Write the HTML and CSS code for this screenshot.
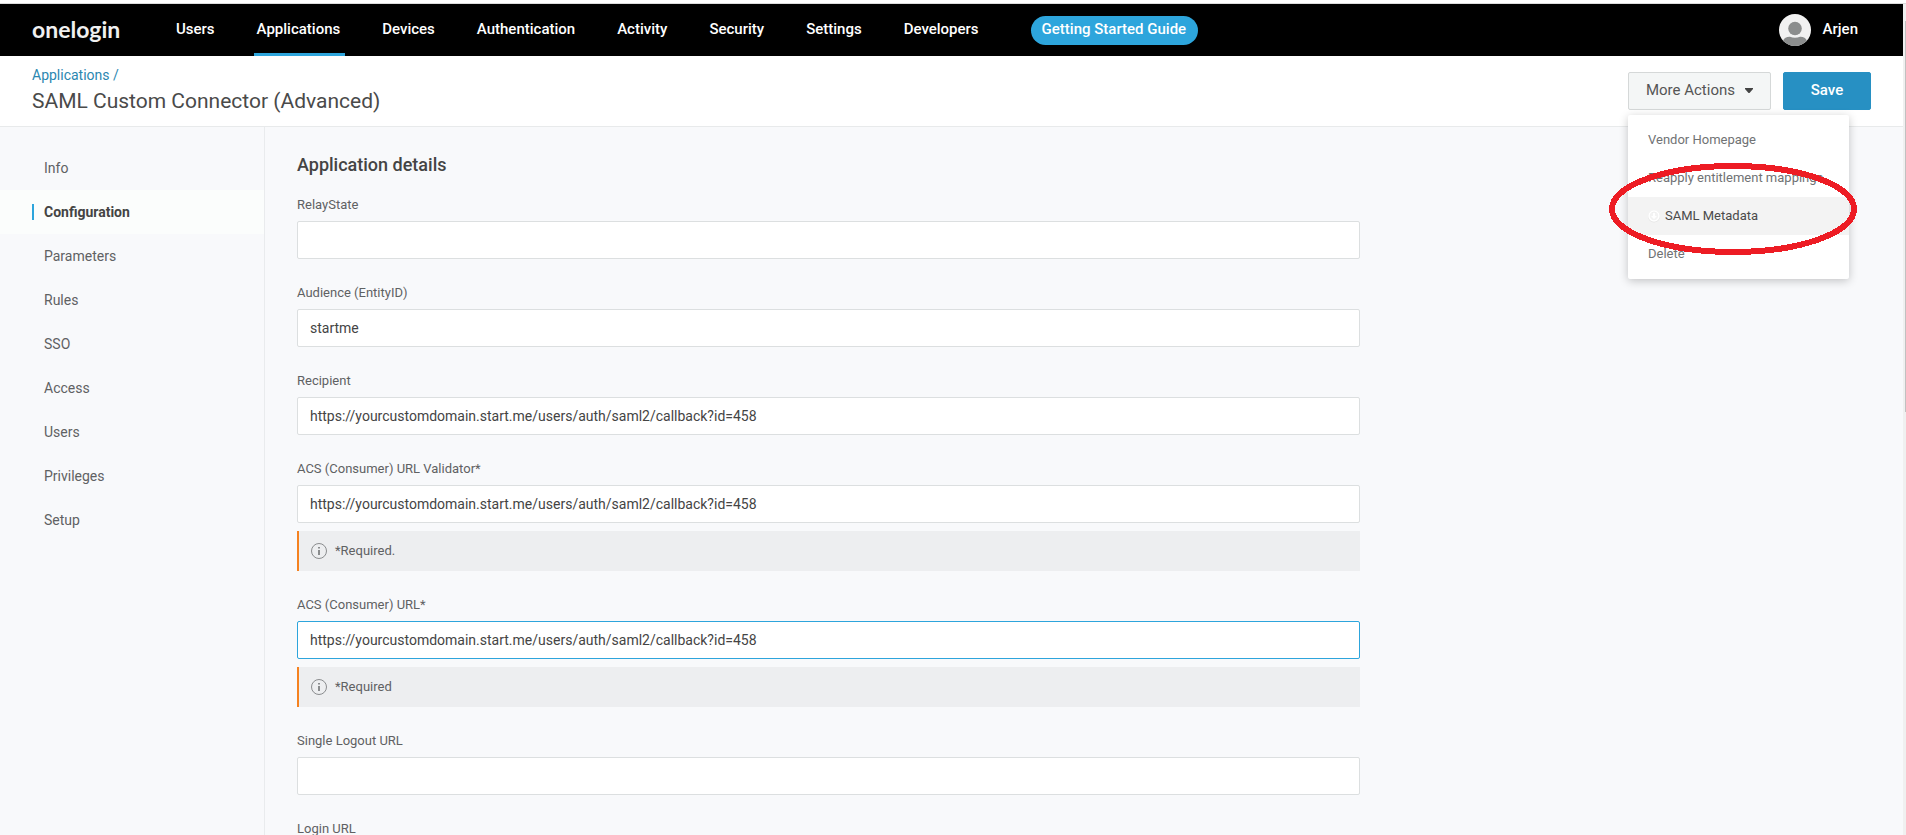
FILE: index.html
```html
<!DOCTYPE html>
<html lang="en">
<head>
<meta charset="utf-8">
<title>SAML Custom Connector (Advanced)</title>
<link rel="stylesheet" href="styles.css">
</head>
<body>
<div class="window">
  <div class="app">
    <header class="topbar">
      <a class="logo" href="#">onelogin</a>
      <nav class="nav">
        <a class="nav-link" href="#">Users</a>
        <a class="nav-link nav-link-active" href="#">Applications</a>
        <a class="nav-link" href="#">Devices</a>
        <a class="nav-link" href="#">Authentication</a>
        <a class="nav-link" href="#">Activity</a>
        <a class="nav-link" href="#">Security</a>
        <a class="nav-link" href="#">Settings</a>
        <a class="nav-link" href="#">Developers</a>
      </nav>
      <a class="guide" href="#">Getting Started Guide</a>
      <a class="account" href="#">
        <svg class="avatar" viewBox="0 0 32 32" aria-hidden="true">
          <defs><clipPath id="avatar-clip"><circle cx="16" cy="16" r="16"/></clipPath></defs>
          <circle cx="16" cy="16" r="16" fill="#f1f1f1"/>
          <g clip-path="url(#avatar-clip)" fill="#8b8d8d">
            <circle cx="16" cy="14.500" r="6.800"/>
            <path d="M4 27C5 24 8 22.600 11 22.800C14 24.200 18 24.200 21 22.800C24 22.600 27 24 28 27V32H4Z"/>
          </g>
        </svg>
        <span class="account-name">Arjen</span>
      </a>
    </header>

    <div class="page-head">
      <div class="titles">
        <a class="crumb" href="#">Applications /</a>
        <h1 class="title">SAML Custom Connector (Advanced)</h1>
      </div>
      <div class="actions">
        <div class="more">
          <button class="button button-more" type="button" aria-expanded="true">More Actions
            <svg class="caret" viewBox="0 0 8 5" aria-hidden="true"><path d="M0 0H8V1L4.500 5H3.500L0 1Z" fill="#444"/></svg>
          </button>
          <div class="menu">
            <a class="menu-item" href="#">Vendor Homepage</a>
            <a class="menu-item" href="#">Reapply entitlement mappings</a>
            <a class="menu-item menu-item-hover" href="#">
              <svg class="download" viewBox="0 0 12 12" aria-hidden="true"><circle cx="6" cy="6.500" r="5.300" fill="none" stroke="#e4e4e4" stroke-width="1.400"/><circle cx="6" cy="6" r="5" fill="none" stroke="#fff" stroke-width="1.600"/><path d="M5 3H7V6H9L6 9L3 6H5Z" fill="#fff"/></svg>SAML Metadata</a>
            <a class="menu-item" href="#">Delete</a>
            <svg class="marker" viewBox="0 0 248 92" aria-hidden="true"><ellipse cx="124" cy="46" rx="121" ry="43" fill="none" stroke="#ed1c24" stroke-width="6" shape-rendering="crispEdges"/></svg>
          </div>
        </div>
        <button class="button button-save" type="submit" form="details">Save</button>
      </div>
    </div>

    <div class="body">
      <nav class="side">
        <a class="side-link" href="#">Info</a>
        <a class="side-link side-link-active" href="#">Configuration</a>
        <a class="side-link" href="#">Parameters</a>
        <a class="side-link" href="#">Rules</a>
        <a class="side-link" href="#">SSO</a>
        <a class="side-link" href="#">Access</a>
        <a class="side-link" href="#">Users</a>
        <a class="side-link" href="#">Privileges</a>
        <a class="side-link" href="#">Setup</a>
      </nav>
      <main class="main">
        <form class="form" id="details">
          <h2 class="section-title">Application details</h2>
          <div class="field">
            <label class="label" for="relay">RelayState</label>
            <input class="input" id="relay" type="text">
          </div>
          <div class="field">
            <label class="label" for="audience">Audience (EntityID)</label>
            <input class="input" id="audience" type="text" value="startme">
          </div>
          <div class="field">
            <label class="label" for="recipient">Recipient</label>
            <input class="input" id="recipient" type="text" value="https://yourcustomdomain.start.me/users/auth/saml2/callback?id=458">
          </div>
          <div class="field">
            <label class="label" for="validator">ACS (Consumer) URL Validator*</label>
            <input class="input" id="validator" type="text" value="https://yourcustomdomain.start.me/users/auth/saml2/callback?id=458">
            <div class="note">
              <svg class="info" viewBox="0 0 16 16" aria-hidden="true"><circle cx="8" cy="8" r="7.500" fill="none" stroke="#8a8c8e"/><path d="M7 4H9V5.500H7ZM7 7H9V12H7Z" fill="#8a8c8e"/></svg>
              <span>*Required.</span>
            </div>
          </div>
          <div class="field">
            <label class="label" for="acs">ACS (Consumer) URL*</label>
            <input class="input input-current" id="acs" type="text" value="https://yourcustomdomain.start.me/users/auth/saml2/callback?id=458">
            <div class="note">
              <svg class="info" viewBox="0 0 16 16" aria-hidden="true"><circle cx="8" cy="8" r="7.500" fill="none" stroke="#8a8c8e"/><path d="M7 4H9V5.500H7ZM7 7H9V12H7Z" fill="#8a8c8e"/></svg>
              <span>*Required</span>
            </div>
          </div>
          <div class="field">
            <label class="label" for="logout">Single Logout URL</label>
            <input class="input" id="logout" type="text">
          </div>
          <div class="field">
            <label class="label" for="login">Login URL</label>
            <input class="input" id="login" type="text">
          </div>
        </form>
      </main>
    </div>
  </div>
  <div class="track"><div class="thumb"></div></div>
</div>
</body>
</html>
```
FILE: styles.css
```css
* { box-sizing: border-box; }

body {
  margin: 0;
  font-family: Roboto, "Liberation Sans", sans-serif;
  font-size: 14px;
  line-height: 20px;
  color: #5f6163;
  background: #fff;
}

a { color: inherit; text-decoration: none; }

.window {
  display: flex;
  height: 100vh;
  padding-top: 3px;
  overflow: hidden;
}

.app {
  display: flex;
  flex: 1;
  flex-direction: column;
  min-width: 0;
  border-top: 1px solid #dcdcdc;
}

.track {
  width: 3px;
  padding: 17px 0 0 2px;
  border-top: 1px solid #dcdcdc;
  background: #f0f0f0;
}

.thumb { height: 48%; background: #c1c1c1; }

/* Top bar */
.topbar {
  display: flex;
  flex: none;
  align-items: center;
  height: 52px;
  padding: 0 44px 0 32px;
  background: #000;
  color: #fff;
  font-size: 15px;
  font-weight: 500;
}

.logo {
  width: 141px;
  padding-bottom: 2px;
  font-family: Lato, sans-serif;
  font-size: 23px;
  font-weight: 700;
  line-height: 24px;
  color: #f0f0f0;
}

.nav {
  display: flex;
  align-self: stretch;
  gap: 34px;
}

.nav-link {
  display: flex;
  align-items: center;
  padding: 0 5px 2px 3px;
}

.nav-link-active { box-shadow: inset 0 -3px #2da5dc; }

.guide {
  margin-left: 47px;
  padding: 3px 12px 6px 11px;
  border-radius: 15px;
  background: #2da5dc;
}

.account {
  display: flex;
  align-items: center;
  gap: 12px;
  margin-left: auto;
}

.account-name { padding: 0 1px 2px 0; }

.avatar { width: 32px; height: 32px; }

/* Page heading */
.page-head {
  display: flex;
  flex: none;
  justify-content: space-between;
  align-items: flex-start;
  padding: 8px 32px 10px;
  border-bottom: 1px solid #e8eaeb;
}

.titles { display: flex; flex-direction: column; }

.crumb { color: #2b87b0; line-height: 22px; }

.title {
  margin: 0;
  font-size: 21px;
  font-weight: 400;
  line-height: 30px;
  color: #4a4a4a;
}

.actions { display: flex; gap: 12px; padding-top: 8px; }

.more { position: relative; }

.button {
  display: flex;
  align-items: center;
  justify-content: center;
  height: 38px;
  padding: 0 6px 2px;
  border: 1px solid #d5d8d8;
  border-radius: 2px;
  font: inherit;
  font-size: 15px;
}

.button-more { gap: 10px; width: 143px; background: #f4f6f6; color: #555; }

.button-save {
  width: 88px;
  border-color: #2790c3;
  background: #2790c3;
  color: #fff;
  font-weight: 500;
}

.caret { width: 8px; height: 5px; }

.menu {
  position: absolute;
  top: 43px;
  left: 0;
  z-index: 2;
  width: 221px;
  padding: 6px 0;
  border-radius: 2px;
  background: #fff;
  box-shadow: 0 2px 10px rgba(0, 0, 0, .22);
  font-size: 13px;
  color: #707274;
}

.menu-item {
  display: flex;
  align-items: center;
  height: 38px;
  padding: 0 20px;
  white-space: nowrap;
}

.menu-item-hover { background: #f3f3f3; color: #4a4a4a; }

.download { width: 12px; height: 12px; margin-right: 5px; overflow: visible; }

.marker {
  position: absolute;
  top: 48px;
  left: -19px;
  width: 248px;
  height: 92px;
}

/* Body */
.body {
  display: flex;
  flex: 1;
  min-height: 0;
  overflow: hidden;
  background: #f8f9fb;
}

.side {
  flex: none;
  width: 265px;
  padding-top: 19px;
  border-right: 1px solid #e9ebed;
}

.side-link {
  display: flex;
  align-items: center;
  height: 44px;
  padding-left: 44px;
}

.side-link-active {
  padding-left: 32px;
  background: #fbfdfc;
  color: #444;
  font-weight: 700;
}

.side-link-active::before {
  content: "";
  width: 2px;
  height: 16px;
  margin-right: 10px;
  background: #2da5dc;
}

.main { flex: 1; padding: 26px 12px 0 32px; }

.form { width: 66.67%; }

.section-title {
  margin: 0 0 19px;
  font-size: 18px;
  font-weight: 500;
  line-height: 24px;
  color: #444;
}

.field { display: flex; flex-direction: column; gap: 8px; margin-bottom: 25px; }

.label { margin-bottom: -1px; font-size: 13px; line-height: 18px; }

.input {
  width: 100%;
  height: 38px;
  padding: 0 12px;
  border: 1px solid #dcdfe0;
  border-radius: 2px;
  background: #fff;
  font: inherit;
  color: #444;
}

.input-current { border-color: #2da5dc; }

.note {
  display: flex;
  align-items: center;
  gap: 8px;
  height: 40px;
  padding-left: 12px;
  border-left: 2px solid #f58220;
  background: #edeef0;
  font-size: 13px;
}

.info { width: 16px; height: 16px; }
```
